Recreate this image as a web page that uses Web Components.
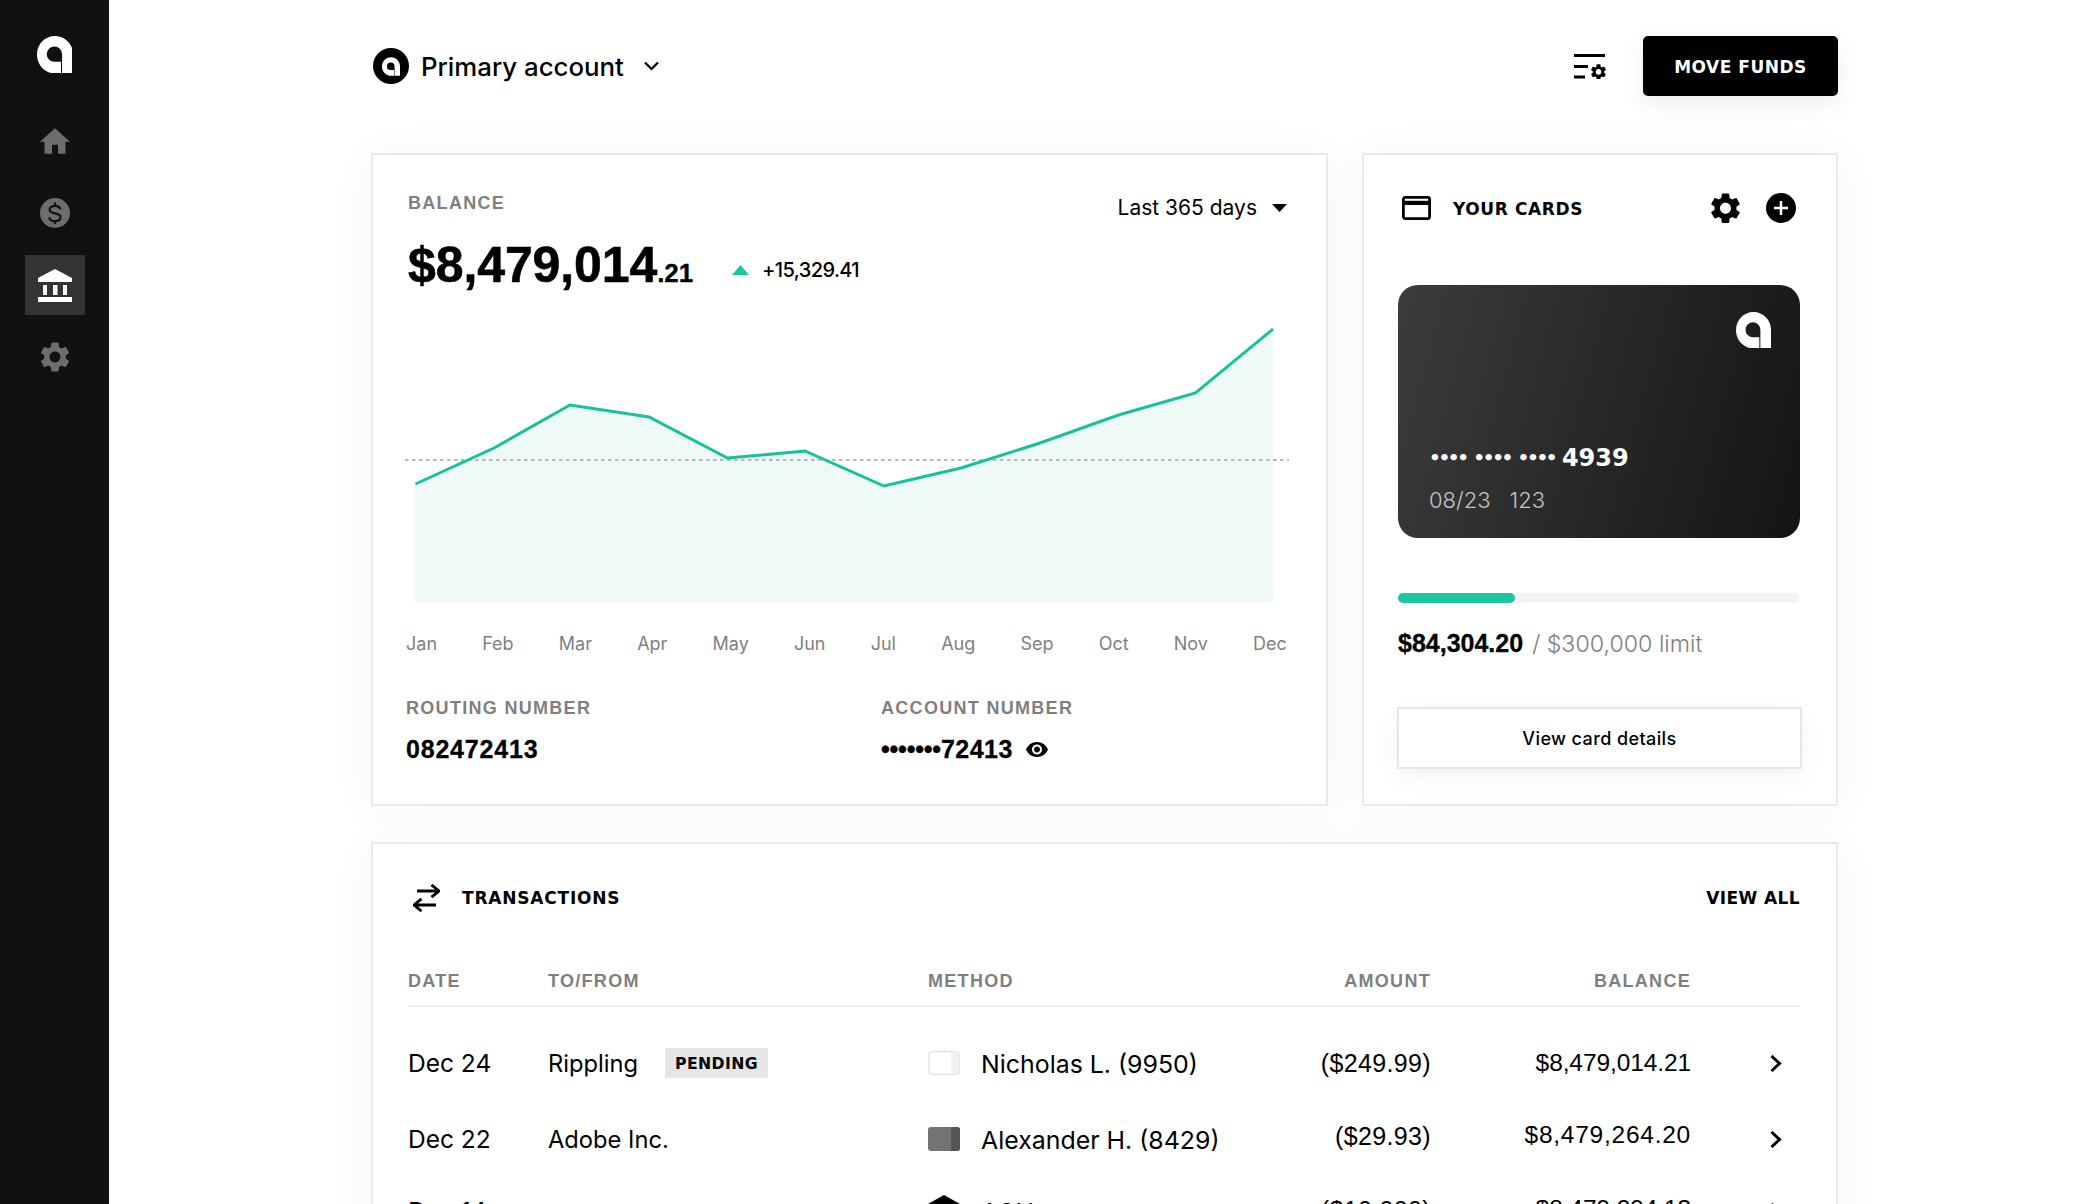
<!doctype html>
<html lang="en">
<head>
<meta charset="utf-8">
<title>Accounts</title>
<style>
  html, body { margin: 0; height: 1204px; overflow: hidden; background: #fff; }
  body { font-family: "Inter", "Liberation Sans", sans-serif; color: #000; }
</style>
</head>
<body>
<app-shell>
  <account-bar></account-bar>
  <div style="display:grid;grid-template-columns:957px 476px;column-gap:34px;margin-top:57px">
    <balance-card></balance-card>
    <cards-panel></cards-panel>
  </div>
  <transactions-panel>
    <tx-row date="Dec 24" name="Rippling" status="PENDING" chip="light" method="Nicholas L. (9950)" amount="($249.99)" balance="$8,479,014.21" amount-shift="-2"></tx-row>
    <tx-row date="Dec 22" name="Adobe Inc." chip="dark" method="Alexander H. (8429)" amount="($29.93)" balance="$8,479,264.20" amount-shift="-8" balance-shift="-8" wide></tx-row>
    <tx-row date="Dec 14" chip="bank" method="ACH" amount="($10,000)" balance="$8,479,294.13" amount-shift="-4" balance-shift="-4" style="margin-top:-4px"></tx-row>
  </transactions-panel>
</app-shell>

<script>
const LOGO = `<svg viewBox="0 0 36.6 38" fill="currentColor" fill-rule="evenodd"><path d="M18.3 0C28.4 0 36.6 8.2 36.6 18.3V38H18.3C8.2 38 0 29.5 0 19 0 8.2 8.2 0 18.3 0ZM17.7 10.7A7.8 7.8 0 0 0 17.7 26.3H24.4V38H25.5V18.5A7.8 7.8 0 0 0 17.7 10.7Z"/></svg>`
const GEAR_PATH = `M19.14 12.94c.04-.3.06-.61.06-.94 0-.32-.02-.64-.07-.94l2.03-1.58c.18-.14.23-.41.12-.61l-1.92-3.32c-.12-.22-.37-.29-.59-.22l-2.39.96c-.5-.38-1.03-.7-1.62-.94l-.36-2.54c-.04-.24-.24-.41-.48-.41h-3.84c-.24 0-.43.17-.47.41l-.36 2.54c-.59.24-1.13.57-1.62.94l-2.39-.96c-.22-.08-.47 0-.59.22L2.74 8.87c-.12.21-.08.47.12.61l2.03 1.58c-.05.3-.09.63-.09.94s.02.64.07.94l-2.03 1.58c-.18.14-.23.41-.12.61l1.92 3.32c.12.22.37.29.59.22l2.39-.96c.5.38 1.03.7 1.62.94l.36 2.54c.05.24.24.41.48.41h3.84c.24 0 .44-.17.47-.41l.36-2.54c.59-.24 1.13-.56 1.62-.94l2.39.96c.22.08.47 0 .59-.22l1.92-3.32c.12-.22.07-.47-.12-.61l-2.01-1.58zM12 15.6c-1.98 0-3.6-1.62-3.6-3.6s1.62-3.6 3.6-3.6 3.6 1.62 3.6 3.6-1.62 3.6-3.6 3.6z`
const GEAR = `<svg viewBox="2.5 2 19 20" fill="currentColor"><path d="${GEAR_PATH}"/></svg>`
const EXT = `"DejaVu Sans", "Liberation Sans", sans-serif`
const PANEL = `
  :host { display: block; box-sizing: border-box; background: #fff; border: 2px solid #e9e9e9; box-shadow: 0 4px 44px rgba(0,0,0,.045); }
  * { box-sizing: border-box; }
  svg { display: block; }`

class AppShell extends HTMLElement {
  constructor() {
    super()
    this.attachShadow({ mode: 'open' })
    this.shadowRoot.innerHTML = `
      <style>
        :host { display: grid; grid-template-columns: 109px 1fr; height: 1204px; overflow: hidden; }
        nav { background: #111; display: flex; flex-direction: column; align-items: center; padding-top: 36px; }
        .logo { width: 36px; height: 38px; color: #fff; margin-bottom: 37px; }
        svg { display: block; }
        .item { width: 60px; height: 60px; margin-bottom: 12px; display: flex; align-items: center; justify-content: center; color: #6d6d6d; }
        .item svg { width: 30px; height: 30px; }
        .item.active { background: #333; color: #fff; }
        .item.active svg { width: 34px; height: 33px; }
        .item .home { height: 26px; }
        main { padding: 36px 262px 0; min-width: 0; }
      </style>
      <nav>
        <div class="logo">${LOGO}</div>
        <div class="item"><svg class="home" viewBox="2 3 20 17" fill="currentColor"><path d="M10 20v-6h4v6h5v-8h3L12 3 2 12h3v8z"/></svg></div>
        <div class="item"><svg viewBox="2 2 20 20"><circle cx="12" cy="12" r="10" fill="currentColor"/><path d="M15.6 9.6c-.3-1.5-1.6-2.3-3.6-2.3s-3.6 1-3.6 2.5c0 3.4 7.3 1.6 7.3 5 0 1.6-1.6 2.6-3.7 2.6s-3.6-.9-3.9-2.5M12 5v2.3M12 17.4v2" fill="none" stroke="#111" stroke-width="1.5"/></svg></div>
        <div class="item active"><svg viewBox="0 0 34 33" fill="currentColor"><path d="M17 0 34 9v4H0V9z"/><rect x="5" y="16" width="4" height="10"/><rect x="15" y="16" width="4.5" height="10"/><rect x="25" y="16" width="4" height="10"/><rect y="28" width="34" height="5"/></svg></div>
        <div class="item">${GEAR}</div>
      </nav>
      <main><slot></slot></main>`
  }
}

class AccountBar extends HTMLElement {
  constructor() {
    super()
    this.attachShadow({ mode: 'open' })
    this.shadowRoot.innerHTML = `
      <style>
        :host { display: flex; align-items: center; height: 60px; }
        svg { display: block; }
        .badge { width: 36px; height: 36px; margin-left: 2px; border-radius: 50%; background: #000; color: #fff; display: flex; align-items: center; justify-content: center; }
        .badge svg { width: 18px; height: 19px; }
        .name { margin-left: 12px; font-size: 25.8px; font-weight: 500; }
        .chev { width: 15px; height: 10px; margin-left: 20px; }
        .filter { width: 32px; height: 26px; margin-left: auto; }
        button { margin-left: 37px; width: 195px; height: 60px; padding-top: 2px; border: 0; border-radius: 5px; background: #000; color: #fff;
          font: 700 17px ${EXT}; letter-spacing: .5px; box-shadow: 0 8px 24px rgba(0,0,0,.07); }
      </style>
      <div class="badge">${LOGO}</div>
      <div class="name">Primary account</div>
      <svg class="chev" viewBox="0 0 15 10" fill="none" stroke="#000" stroke-width="2.2"><path d="M1 1.5 7.5 8 14 1.5"/></svg>
      <svg class="filter" viewBox="0 0 32 26" fill="#000"><rect y="1" width="31" height="3"/><rect y="12" width="14" height="3"/><rect y="22.5" width="11" height="3"/><svg x="17" y="11" width="15" height="15.8" viewBox="2.5 2 19 20"><path d="${GEAR_PATH}"/></svg></svg>
      <button type="button">MOVE FUNDS</button>`
  }
}

class BalanceCard extends HTMLElement {
  constructor() {
    super()
    this.attachShadow({ mode: 'open' })
    const line = [[10.5,164],[89,128],[165,85],[244,97],[322.5,138],[400,131],[479,166],[556,148],[635,123],[713.5,95],[790.5,73],[868,9]]
    const points = line.map((p) => p.join(',')).join(' ')
    const months = ['Jan','Feb','Mar','Apr','May','Jun','Jul','Aug','Sep','Oct','Nov','Dec']
    this.shadowRoot.innerHTML = `
      <style>
        ${PANEL}
        :host { height: 653px; padding: 35px 36px 0 32px; }
        .label { font: 700 18px/24px "Liberation Sans", sans-serif; color: #7f7f7f; letter-spacing: 1.3px; }
        .top { display: flex; justify-content: space-between; height: 36px; padding-left: 3px; }
        .top .label { line-height: 26px; }
        .range { display: flex; align-items: center; font-size: 21px; line-height: 36px; padding-right: 3px; }
        .range svg { width: 15px; height: 8px; margin-left: 15px; }
        .total { display: flex; align-items: baseline; margin: 14px 0 0 3px; height: 50px; line-height: 50px; font-family: "Liberation Sans", sans-serif; font-weight: 700; font-size: 50px; -webkit-text-stroke: .6px #000; letter-spacing: -.1px; }
        .total small { font-size: 26px; -webkit-text-stroke: .3px #000; }
        .change { display: flex; align-items: center; align-self: center; margin: 9px 0 0 39px; font-size: 20px; font-weight: 500; letter-spacing: -.6px; font-family: "Inter", sans-serif; line-height: 30px; -webkit-text-stroke: 0; }
        .change svg { width: 17px; height: 10px; margin-right: 13px; }
        .chart { width: 884px; height: 290px; margin-top: 30px; }
        .months { display: flex; justify-content: space-between; margin-top: 22px; padding: 0 3px 0 1px; font-size: 18px; line-height: 24px; color: #808080; }
        .ids { display: grid; grid-template-columns: 475px 1fr; margin-top: 40px; padding-left: 1px; }
        .value { display: flex; align-items: center; margin-top: 14px; font: 700 25px/30px "Liberation Sans", sans-serif; letter-spacing: .8px; -webkit-text-stroke: .3px #000; }
        .value .dots { letter-spacing: -.2px; }
        .value .last { letter-spacing: .5px; }
        .value svg { width: 22px; height: 15px; margin-left: 13px; }
      </style>
      <div class="top">
        <div class="label">BALANCE</div>
        <div class="range">Last 365 days<svg viewBox="0 0 15 8" fill="#000"><path d="M0 0h15L7.5 8z"/></svg></div>
      </div>
      <div class="total">$8,479,014<small>.21</small>
        <div class="change"><svg viewBox="0 0 17 10" fill="#19c8a0"><path d="M8.5 0 17 10H0z"/></svg>+15,329.41</div>
      </div>
      <svg class="chart" viewBox="0 0 884 290">
        <polygon points="9.5,165 ${points} 868,282 9.5,282" fill="#eff9f5"/>
        <line x1="0" y1="140" x2="884" y2="140" stroke="#b8b8b8" stroke-width="2" stroke-dasharray="3.5 3.5"/>
        <polyline points="${points}" fill="none" stroke="#14c39a" stroke-width="3"/>
      </svg>
      <div class="months">${months.map((m) => `<span>${m}</span>`).join('')}</div>
      <div class="ids">
        <div>
          <div class="label">ROUTING NUMBER</div>
          <div class="value">082472413</div>
        </div>
        <div>
          <div class="label">ACCOUNT NUMBER</div>
          <div class="value"><span class="dots">•••••••</span><span class="last">72413</span><svg viewBox="1 4.5 22 15" fill="#000"><path d="M12 4.5C7 4.5 2.73 7.61 1 12c1.73 4.39 6 7.5 11 7.5s9.27-3.11 11-7.5c-1.73-4.39-6-7.5-11-7.5zM12 17c-2.76 0-5-2.24-5-5s2.24-5 5-5 5 2.24 5 5-2.24 5-5 5zm0-8c-1.66 0-3 1.34-3 3s1.34 3 3 3 3-1.34 3-3-1.34-3-3-3z"/></svg></div>
        </div>
      </div>`
  }
}

class CardsPanel extends HTMLElement {
  constructor() {
    super()
    this.attachShadow({ mode: 'open' })
    this.shadowRoot.innerHTML = `
      <style>
        ${PANEL}
        :host { height: 653px; padding: 38px 36px 0 34px; }
        .head { display: flex; align-items: center; height: 30px; }
        .icon { width: 29px; height: 24px; margin-left: 4px; }
        h3 { margin: 2px 0 0 22px; font: 700 17px ${EXT}; letter-spacing: .6px; }
        .gear { width: 29px; height: 30px; margin-left: auto; color: #000; }
        .plus { width: 30px; height: 30px; margin: 0 4px 0 26px; }
        .visual { height: 253px; margin-top: 62px; padding: 27px 29px 25px 31px; border-radius: 20px; color: #fff; display: flex; flex-direction: column;
          background: linear-gradient(105deg, #3c3c3c, #141414); }
        .logo { width: 35px; height: 36px; margin-left: auto; }
        .number { display: flex; align-items: center; margin-top: auto; height: 30px; font: 700 24px/30px ${EXT}; }
        .number span { font-size: 18.5px; letter-spacing: -2.4px; margin-right: 6.6px; }
        .exp { display: flex; gap: 19px; margin-top: 14px; font-size: 22px; font-weight: 300; line-height: 26px; color: #c4c4c4; }
        .bar { height: 10px; margin-top: 55px; border-radius: 5px; background: #f4f4f4; }
        .bar div { width: 117px; height: 100%; border-radius: 5px; background: #19c8a0; }
        .limit { display: flex; align-items: baseline; margin-top: 25px; font-size: 23.2px; line-height: 30px; font-weight: 300; color: #808080; }
        .limit b { font: 700 25px/30px "Liberation Sans", sans-serif; color: #000; margin-right: 9px; -webkit-text-stroke: .3px #000; }
        button { display: block; width: 405px; height: 62px; margin: 48px 0 0 -1px; background: #fff; border: 2px solid #e6e6e6;
          font: 500 18px "Inter", sans-serif; letter-spacing: .4px; color: #000; box-shadow: 0 8px 24px rgba(0,0,0,.05); }
      </style>
      <div class="head">
        <svg class="icon" viewBox="0 0 29 24"><rect x="1.4" y="1.4" width="26.2" height="21.2" rx="2" fill="none" stroke="#000" stroke-width="2.8"/><rect x="1" y="4.8" width="27" height="4.2"/></svg>
        <h3>YOUR CARDS</h3>
        <div class="gear">${GEAR}</div>
        <svg class="plus" viewBox="0 0 30 30"><circle cx="15" cy="15" r="15"/><path d="M15 8v14M8 15h14" stroke="#fff" stroke-width="2.6"/></svg>
      </div>
      <div class="visual">
        <div class="logo">${LOGO}</div>
        <div class="number"><span>••••</span><span>••••</span><span>••••</span>4939</div>
        <div class="exp"><span>08/23</span><span>123</span></div>
      </div>
      <div class="bar"><div></div></div>
      <div class="limit"><b>$84,304.20</b>/ $300,000 limit</div>
      <button type="button">View card details</button>`
  }
}

class TransactionsPanel extends HTMLElement {
  constructor() {
    super()
    this.attachShadow({ mode: 'open' })
    this.shadowRoot.innerHTML = `
      <style>
        ${PANEL}
        :host { margin-top: 36px; padding: 39px 36px 0 35px; height: 500px; }
        .head { display: flex; align-items: center; height: 30px; font: 700 17px ${EXT}; }
        .head svg { width: 27px; height: 28px; margin-left: 5px; }
        .head h3 { margin: 0 0 0 22px; font: inherit; letter-spacing: .8px; }
        .head a { margin-left: auto; letter-spacing: .4px; }
        .cols { display: grid; grid-template-columns: 140px 380px 503px 260px 1fr; margin-top: 56px; padding-bottom: 12px; border-bottom: 2px solid #f0f0f0;
          font: 700 18px/24px "Liberation Sans", sans-serif; letter-spacing: 1.3px; color: #7f7f7f; margin-bottom: 18px; }
        .split { display: flex; justify-content: space-between; }
        .num { text-align: right; }
      </style>
      <div class="head">
        <svg viewBox="0 0 27 28" fill="none" stroke="#000" stroke-width="2.8"><path d="M4 7h21.5M18.5 .8l7.5 6.2-7.5 6.2M23 21H1.5M8.5 14.8 1 21l7.5 6.2"/></svg>
        <h3>TRANSACTIONS</h3>
        <a>VIEW ALL</a>
      </div>
      <div class="cols"><span>DATE</span><span>TO/FROM</span><span class="split"><span>METHOD</span><span>AMOUNT</span></span><span class="num">BALANCE</span></div>
      <slot></slot>`
  }
}

class TxRow extends HTMLElement {
  constructor() {
    super()
    this.attachShadow({ mode: 'open' })
  }

  connectedCallback() {
    const a = (n) => this.getAttribute(n) || ''
    const chips = {
      light: `<rect x=".75" y=".75" width="30.5" height="22.5" rx="3" fill="#fff" stroke="#e6e6e6" stroke-width="1.5"/><rect x="23" y="1.5" width="7.5" height="21" fill="#f1f1f1"/>`,
      dark: `<rect width="32" height="24" rx="3" fill="#737373"/><path d="M23 0h6a3 3 0 0 1 3 3v18a3 3 0 0 1-3 3h-6z" fill="#555"/>`,
      bank: `<path d="M16 0 32 9v15H0V9z" fill="#000"/>`,
    }
    this.shadowRoot.innerHTML = `
      <style>
        :host { display: grid; grid-template-columns: 140px 380px 503px 260px 1fr; align-items: center; height: 76px; font-size: 24.5px; }
        .who { display: flex; align-items: center; font-size: 23.7px; }
        .tag { margin-left: 27px; padding: 0 10px; height: 30px; background: #e6e6e6; font: 700 15.7px/32px ${EXT}; letter-spacing: .4px; }
        .method { display: grid; grid-template-columns: 32px auto 1fr; column-gap: 21px; align-items: center; font-size: 24.9px; margin-top: 2px; }
        .method svg { display: block; width: 32px; height: 24px; margin-top: ${a('chip') === 'bank' ? '-10px' : '-2px'}; }
        .amount { text-align: right; font: 400 25px "Liberation Sans", sans-serif; letter-spacing: .35px; margin-top: ${a('amount-shift') || 0}px; }
        .balance { text-align: right; font: 400 24.5px "Liberation Sans", sans-serif; letter-spacing: ${this.hasAttribute('wide') ? '.75px' : '-.1px'}; margin-top: ${a('balance-shift') || 0}px; }
        .chev { display: block; width: 12px; height: 17px; margin-left: 79px; }
      </style>
      <div>${a('date')}</div>
      <div class="who">${a('name')}${a('status') ? `<span class="tag">${a('status')}</span>` : ''}</div>
      <div class="method"><svg viewBox="0 0 32 24">${chips[a('chip')]}</svg><span>${a('method')}</span>
        <div class="amount">${a('amount')}</div></div>
      <div class="balance">${a('balance')}</div>
      <svg class="chev" viewBox="0 0 12 17" fill="none" stroke="#000" stroke-width="3"><path d="M1.5 1 9.5 8.5 1.5 16"/></svg>`
  }
}

customElements.define('app-shell', AppShell)
customElements.define('account-bar', AccountBar)
customElements.define('balance-card', BalanceCard)
customElements.define('cards-panel', CardsPanel)
customElements.define('transactions-panel', TransactionsPanel)
customElements.define('tx-row', TxRow)
</script>
</body>
</html>
